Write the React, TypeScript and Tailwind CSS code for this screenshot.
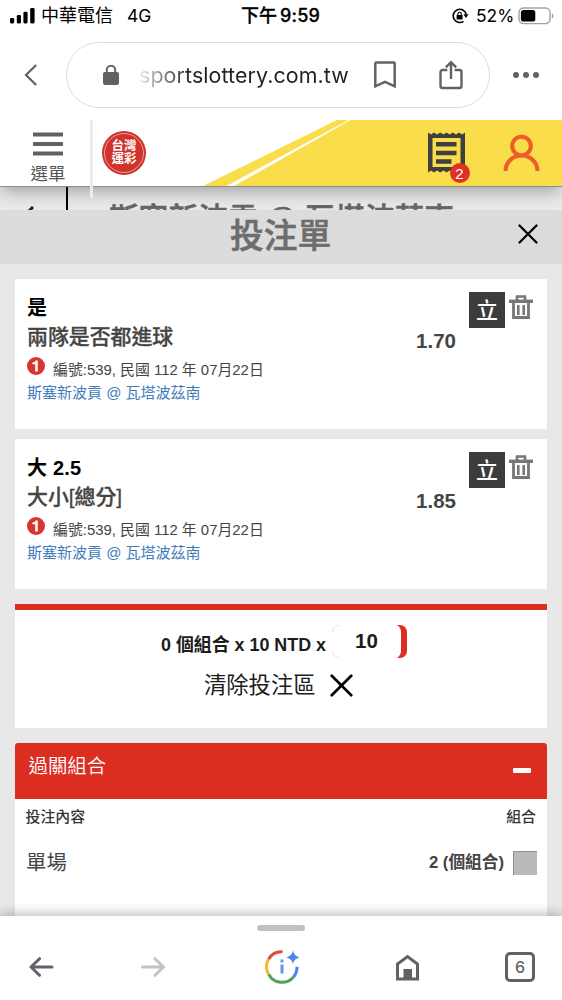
import React from "react";

const CloseIcon = ({ className }: { className: string }) => (
  <svg viewBox="0 0 24 24" className={className} fill="none" stroke="#000" strokeWidth="2.8" strokeLinecap="round">
    <path d="M1.8 1.8 22.2 22.2M22.2 1.8 1.8 22.2" />
  </svg>
);

function StatusBar() {
  return (
    <div className="flex h-8 items-center font-['Inter','Noto_Sans_CJK_TC',sans-serif] text-black">
      <svg className="ml-2.5 h-4 w-[25px]" viewBox="0 0 25 16">
        <rect x="0" y="10" width="4.2" height="5.4" rx="1.3" />
        <rect x="6.8" y="7" width="4.2" height="8.4" rx="1.3" />
        <rect x="13.4" y="3.7" width="4.2" height="11.7" rx="1.3" />
        <rect x="20.2" y="0" width="4.4" height="15.4" rx="1.3" />
      </svg>
      <span className="ml-[6px] w-[86px] whitespace-nowrap text-[18px] leading-8">中華電信</span>
      <span className="w-[114px] whitespace-nowrap text-[17.5px] leading-8">4G</span>
      <span className="w-[211px] whitespace-nowrap text-[18px] font-medium leading-8 [-webkit-text-stroke:0.3px_#000]">
        下午<span className="ml-[3px] tracking-[0.2px]">9:59</span>
      </span>
      <svg className="h-4 w-[17px]" viewBox="0 0 17 16" fill="none" stroke="#000" strokeWidth="1.6">
        <path d="M14.2 6.2A6.6 6.6 0 1 0 11.5 13.4" />
        <path d="M11.4 6.3h5.2l-2.6 3.7z" fill="#000" stroke="none" />
        <rect x="4.6" y="7" width="6" height="4.6" rx=".6" fill="#000" stroke="none" />
        <path d="M5.9 7.4V5.9a1.7 1.7 0 0 1 3.4 0v1.5" strokeWidth="1.1" />
      </svg>
      <span className="ml-[7px] w-[42px] whitespace-nowrap text-[17.4px] leading-8">52%</span>
      <svg className="h-[18px] w-9" viewBox="0 0 36 18">
        <rect x="1" y="1" width="31" height="15.6" rx="4.5" fill="none" stroke="#a2a2a2" strokeWidth="1.4" />
        <rect x="2.9" y="3" width="14.4" height="11.6" rx="2.6" />
        <path d="M33.8 6.2c2 .8 2 4.6 0 5.4z" fill="#a2a2a2" />
      </svg>
    </div>
  );
}

function AddressBar() {
  return (
    <div className="relative z-20 flex h-[88px] items-start bg-white pt-2.5">
      <svg className="ml-6 mt-[22px] h-[22px] w-[13px]" viewBox="0 0 13 22" fill="none" stroke="#5f6368" strokeWidth="2.2">
        <path d="M12.2 1 2 11l10.2 10" />
      </svg>
      <div className="ml-[29px] flex h-[66px] w-[424px] items-center rounded-full border-[1.5px] border-[#dcdcdf]">
        <svg className="ml-9 h-5 w-4" viewBox="0 0 16 20">
          <rect x="0" y="7" width="16" height="13" rx="2" fill="#5f6368" />
          <path d="M3.8 8V5a4.2 4.2 0 0 1 8.400 0v3" fill="none" stroke="#5f6368" strokeWidth="2" />
        </svg>
        <span className="ml-5 w-[235px] whitespace-nowrap bg-linear-to-r from-[#eeeeee] to-[#202124] to-[22%] bg-clip-text font-['Inter',sans-serif] text-[21.4px] leading-[30px] tracking-[0.1px] text-transparent">
          sportslottery.com.tw
        </span>
        <svg className="h-7 w-[22px]" viewBox="0 0 22 28" fill="none" stroke="#5f6368" strokeWidth="2.5">
          <path d="M1.3 2.5q0-1 1-1h17.400q1 0 1 1v22.800L11 20.900l-9.700 4.400z" />
        </svg>
        <svg className="ml-[43px] h-[30px] w-6" viewBox="0 0 24 30" fill="none" stroke="#5f6368" strokeWidth="2.4">
          <path d="M8.3 10H3.500a2 2 0 0 0-2 2v14a2 2 0 0 0 2 2h17a2 2 0 0 0 2-2V12a2 2 0 0 0-2-2h-4.800M12 19V2.600M6.800 7.400 12 2.200l5.200 5.200" />
        </svg>
      </div>
      <svg className="ml-[23px] mt-[30px] h-[6px] w-[26px]" viewBox="0 0 26 6" fill="#5f6368">
        <circle cx="3" cy="3" r="3" />
        <circle cx="13" cy="3" r="3" />
        <circle cx="23" cy="3" r="3" />
      </svg>
    </div>
  );
}

function SiteHeader() {
  return (
    <header className="relative z-10 flex h-[67px] border-b border-[#8c8c8c] bg-white shadow-[0_6px_16px_-2px_rgba(0,0,0,0.32)]">
      <svg className="absolute left-0 top-0 h-[66px] w-[562px]" viewBox="0 0 562 66">
        <path d="M203 66 337 0H562V66z" fill="#f9dd4a" />
        <path d="M226.500 66 348.500 0h2L234 66z" fill="#fff" />
      </svg>
      <div className="absolute left-[90px] top-0 h-[78px] w-[3px] bg-[#ececec]" />
      <div className="relative flex w-[90px] flex-col pt-3">
        <svg className="ml-[33px] h-6 w-[30px]" viewBox="0 0 30 24" fill="#626262">
          <rect y="0.500" width="30" height="4" />
          <rect y="10" width="30" height="4" />
          <rect y="19.500" width="30" height="4" />
        </svg>
        <span className="ml-[30.500px] mt-[7px] text-[17.500px] leading-[22px] text-[#555]">選單</span>
      </div>
      <div className="relative ml-3 mt-[11px] flex size-11 items-center justify-center rounded-full bg-[#cf332d]">
        <div className="absolute inset-[2px] rounded-full border border-[#ec9d96]" />
        <div className="text-center text-[12.500px] font-bold leading-[13px] text-white">
          台灣
          <br />
          運彩
        </div>
      </div>
      <div className="relative ml-[282px] mt-3 h-[41px] w-[37px]">
        <svg className="h-[41px] w-[37px]" viewBox="0 0 37 41">
          <path
            d="M0 .5 3 2.500 6 .5 9 2.500 12.200 .5 15.400 2.500 18.500 .5 21.600 2.500 24.800 .5 28 2.500 31 .5 34 2.500 37 .5V40.500L34 38.500 31 40.500 28 38.500 24.800 40.500 21.600 38.500 18.500 40.500 15.400 38.500 12.200 40.500 9 38.500 6 40.500 3 38.500 0 40.500zM4.500 6V35H32.500V6z"
            fill="#3f3f3f"
            fillRule="evenodd"
          />
          <path d="M8 10h20.500v4.500H8zM8 18.800h20.500v4.500H8zM8 27.200h15.500v4.500H8z" fill="#3f3f3f" />
        </svg>
        <span className="absolute left-[21.500px] top-[31px] flex size-5 items-center justify-center rounded-full bg-[#e03224] text-[15px] leading-none text-white">
          2
        </span>
      </div>
      <svg className="relative ml-[38px] mt-[14px] h-[38px] w-[37px]" viewBox="0 0 37 38" fill="none" stroke="#f15a29" strokeWidth="4">
        <circle cx="18.500" cy="12" r="9.300" />
        <path d="M2.500 37a16 15.500 0 0 1 32 0" />
      </svg>
    </header>
  );
}

function MatchStrip() {
  return (
    <div className="flex h-[23px] overflow-hidden bg-[#e9e9e9]">
      <svg className="ml-[27px] mt-[19px] h-4 w-[10px] shrink-0" viewBox="0 0 10 16" fill="none" stroke="#222" strokeWidth="3">
        <path d="M6 1 0 7l6 7" />
      </svg>
      <div className="ml-[29px] h-full w-0.5 bg-black" />
      <span className="ml-[41px] mt-[12px] whitespace-nowrap text-[29.400px] font-medium leading-10 tracking-[0.4px] text-[#666] [-webkit-text-stroke:0.6px_#666]">
        斯塞新波貢 @ 瓦塔波茲南
      </span>
    </div>
  );
}

function BetCard({ pick, market, odds }: { pick: string; market: string; odds: string }) {
  return (
    <section className="flex h-[150px] bg-white pl-3 pr-[14px]">
      <div className="flex-1 pt-[15px]">
        <div className="text-[20px] font-bold leading-7 tracking-[0.2px] text-black">{pick}</div>
        <div className="mt-px text-[20.900px] font-medium leading-7 text-[#444] [-webkit-text-stroke:0.3px_#444]">{market}</div>
        <div className="mt-[7px] flex h-6">
          <svg className="mt-[-1px] size-[18px]" viewBox="0 0 18 18">
            <circle cx="9" cy="9" r="9" fill="#da342e" />
            <path d="M10.800 3.500v11H8.200V7.200H5.400V5.500q2.700 0 3.300-2z" fill="#fff" />
          </svg>
          <span className="ml-2 whitespace-nowrap text-[14.900px] leading-6 text-[#444]">編號:539, 民國 112 年 07月22日</span>
        </div>
        <div className="text-[15px] leading-[22px] text-[#3f7bbd]">斯塞新波貢 @ 瓦塔波茲南</div>
      </div>
      <div className="mr-[13px] pt-12 text-[20.500px] font-bold leading-7 text-[#444]">{odds}</div>
      <div className="mt-[13px] flex size-9 items-center justify-center bg-[#3c3c3c] pt-0.5 text-[22px] font-medium leading-9 text-white">
        立
      </div>
      <svg className="ml-1 mt-4 h-6 w-6" viewBox="0 0 24 24" fill="none" stroke="#777">
        <path d="M0 6.300h24" strokeWidth="3.400" />
        <path d="M8 5V1.500h8V5" strokeWidth="2.600" />
        <path d="M4.500 7v15.500h15V7" strokeWidth="2.800" />
        <path d="M9.300 10v10M14.700 10v10" strokeWidth="2.600" />
      </svg>
    </section>
  );
}

function StakePanel() {
  return (
    <section className="mt-[15px] h-[124px] border-t-[6px] border-[#dc2e20] bg-white">
      <div className="flex h-12 items-start pl-[146px] pt-[15px]">
        <span className="mt-[5px] w-[171px] whitespace-nowrap text-[17.900px] font-bold leading-[30px] text-[#1d1d1d]">
          0 個組合 x 10 NTD x
        </span>
        <div className="relative h-[33px] w-[75px] rounded-[7px] bg-[#dc2e20]">
          <div className="absolute -left-px -top-px h-[35px] w-[70px] rounded-[8px] bg-white pl-6 text-[20.500px] font-bold leading-[34px] text-[#1d1d1d]">
            10
          </div>
          <svg className="absolute left-0 top-0 h-[33px] w-2" viewBox="0 0 8 33" fill="none" stroke="#f7cfcc" strokeWidth=".8">
            <path d="M7 .5Q1 .5.500 7M.5 26Q1 32.500 7 32.500" />
          </svg>
        </div>
      </div>
      <div className="flex items-center pl-[189px] pt-3">
        <span className="w-[126px] pt-px text-[22.300px] leading-[30px] text-[#1d1d1d]">清除投注區</span>
        <CloseIcon className="size-[23px]" />
      </div>
    </section>
  );
}

function ComboPanel() {
  return (
    <section className="mt-[15px] h-[190px] rounded-t-[3px] bg-white">
      <div className="flex h-14 justify-between rounded-t-[3px] bg-[#dc2e20] pl-[13.500px] pr-4">
        <span className="pt-2 text-[19.400px] font-[350] leading-[30px] text-white">過關組合</span>
        <div className="mt-[25px] h-[5px] w-[18px] rounded-[1px] bg-white" />
      </div>
      <div className="flex justify-between pl-[10.500px] pr-[11px] pt-1.5 text-[14.900px] font-medium leading-6 text-[#333]">
        <span>投注內容</span>
        <span>組合</span>
      </div>
      <div className="mt-[18px] flex h-8 items-center pl-[11px] pr-2.5">
        <span className="flex-1 text-[20.400px] leading-8 text-[#444]">單場</span>
        <span className="text-[16.700px] font-bold leading-8 text-[#444]">2 (個組合)</span>
        <div className="ml-[9px] size-6 border-l border-t border-[#909193] bg-[#b9babc]" />
      </div>
    </section>
  );
}

function BrowserToolbar() {
  return (
    <nav className="relative h-[84px] bg-white shadow-[0_-1px_12px_rgba(0,0,0,0.32)]">
      <div className="flex justify-center pt-[9px]">
        <div className="h-1.5 w-12 rounded-full bg-[#bdc1c6]" />
      </div>
      <div className="flex items-start pl-[29px] pt-[18px]">
        <svg className="mt-2 h-5 w-[25px]" viewBox="0 0 25 20" fill="none" stroke="#5f6368" strokeWidth="3" strokeLinecap="round" strokeLinejoin="round">
          <path d="M23 10H2.500M10.500 1.700 2 10l8.500 8.300" />
        </svg>
        <svg className="ml-[87px] mt-2 h-5 w-[25px]" viewBox="0 0 25 20" fill="none" stroke="#c0c3c7" strokeWidth="3" strokeLinecap="round" strokeLinejoin="round">
          <path d="M1.500 10h20.500M14 1.700l8.500 8.300L14 18.300" />
        </svg>
        <svg className="ml-[99px] mt-px h-[34px] w-[35px]" viewBox="0 0 35 34" fill="none" strokeWidth="3">
          <path d="M3.500 9.300A15 15 0 0 1 17.500 1.800" stroke="#dc4c3e" />
          <path d="M3.500 9.300A15 15 0 0 0 3.800 24.500" stroke="#f1b936" />
          <path d="M3.800 24.500A15 15 0 0 0 28.300 27.200" stroke="#50a456" />
          <path d="M28.300 27.200A15 15 0 0 0 32 16.800" stroke="#4f83ed" />
          <path d="M17 14.500V23.500M17 9.400V12.400" stroke="#6a93ef" />
          <path d="M28 .6Q29 6 34.300 7.400 29 8.700 28 13.800 26.800 8.700 21.500 7.400 26.800 6 28 .6z" fill="#4f83ed" />
        </svg>
        <svg className="ml-24 mt-[5px] h-[27px] w-[23px]" viewBox="0 0 23 27" fill="none" stroke="#5f6368" strokeWidth="3">
          <path d="M1.500 25V10L11.500 2.500l10 7.500V25z" />
          <path d="M7.500 15h8.500V26H7.500z" fill="#5f6368" stroke="none" />
        </svg>
        <div className="ml-[86px] mt-[3px] flex size-[30px] items-center justify-center rounded-[5px] border-[3px] border-[#5f6368] font-['Inter',sans-serif] text-[16px] font-medium leading-none text-[#5f6368]">
          6
        </div>
      </div>
    </nav>
  );
}

export default function App() {
  return (
    <div className="h-[1000px] w-[562px] overflow-hidden bg-white font-['Liberation_Sans','Noto_Sans_CJK_TC',sans-serif]">
      <StatusBar />
      <AddressBar />
      <SiteHeader />
      <MatchStrip />
      <div className="relative z-20 flex h-[54px] items-center bg-[#dcdcdc] pl-[230px]">
        <h1 className="w-[287.500px] text-[33.700px] font-medium leading-[52px] text-[#6d6d6d] [-webkit-text-stroke:0.6px_#6d6d6d] mt-[-3px]">
          投注單
        </h1>
        <CloseIcon className="mt-[-6px] size-5" />
      </div>
      <main className="h-[652px] overflow-hidden bg-[#e8e8e8] px-[15px] pt-[15px]">
        <div className="flex flex-col gap-2.5">
          <BetCard pick="是" market="兩隊是否都進球" odds="1.70" />
          <BetCard pick="大 2.5" market="大小[總分]" odds="1.85" />
        </div>
        <StakePanel />
        <ComboPanel />
      </main>
      <BrowserToolbar />
    </div>
  );
}
